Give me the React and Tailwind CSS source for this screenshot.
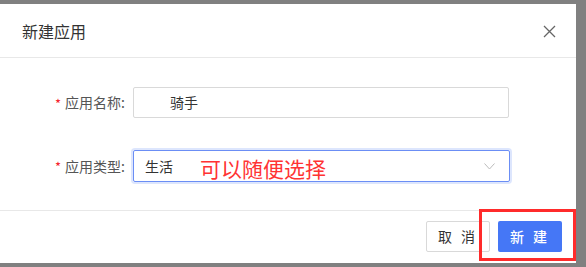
import React from "react";

export default function App() {
  const font = { fontFamily: '"Noto Sans CJK SC", "Noto Sans", sans-serif' };
  return (
    <div className="w-[586px] h-[267px] bg-[#808080] pt-[4px] overflow-hidden" style={font}>
      <div className="w-[576px] h-[259px] bg-white flex flex-col">
        {/* header */}
        <div className="h-[54px] border-b border-[#e8e8e8] flex items-center justify-between pl-[22px] pr-[20px]">
          <span className="text-[16px] text-[#333]">新建应用</span>
          <svg width="13" height="13" viewBox="0 0 13 13" className="mt-[1px]">
            <path d="M1 1 L12 12 M12 1 L1 12" stroke="#666" strokeWidth="1.3" fill="none" />
          </svg>
        </div>
        {/* body */}
        <div className="flex flex-col pt-[29px] gap-[32px] h-[153px] border-b border-[#e8e8e8]">
          <div className="flex items-center">
            <div className="w-[133px] pr-[8px] flex justify-end items-center text-[14px] text-[#555]">
              <span className="text-[#f5222d] mr-[4px] text-[13px] mt-[2px]">*</span>
              <span>应用名称:</span>
            </div>
            <div className="w-[376px] h-[31px] border border-[#d9d9d9] rounded-[2px] flex items-center pl-[36px] text-[14px] text-[#333]">
              骑手
            </div>
          </div>
          <div className="flex items-center">
            <div className="w-[133px] pr-[8px] flex justify-end items-center text-[14px] text-[#555]">
              <span className="text-[#f5222d] mr-[4px] text-[13px] mt-[2px]">*</span>
              <span>应用类型:</span>
            </div>
            <div className="w-[377px] h-[32px] border border-[#6b8ef5] rounded-[2px] shadow-[0_0_0_2px_rgba(64,118,246,0.18)] flex items-center pl-[11px] pr-[14px] text-[14px] text-[#333]">
              <span>生活</span>
              <span className="ml-[27px] text-[21px] leading-none text-[#ff3333] mt-[4px]">可以随便选择</span>
              <svg width="11" height="7" viewBox="0 0 11 7" className="ml-auto">
                <path d="M0.5 0.5 L5.5 6 L10.5 0.5" stroke="#bbb" strokeWidth="1" fill="none" />
              </svg>
            </div>
          </div>
        </div>
        {/* footer */}
        <div className="relative flex-1 flex justify-end items-start pt-[10px] pr-[14px] gap-[8px]">
          <button className="w-[64px] h-[31px] border border-[#d9d9d9] rounded-[2px] bg-white text-[14px] text-[#333] tracking-[3px]">
            取 消
          </button>
          <button className="w-[64px] h-[31px] rounded-[2px] bg-[#4577f6] text-[14px] text-white font-medium tracking-[3px]">
            新 建
          </button>
          <div className="absolute left-[479px] top-[-2px] w-[97px] h-[52px] border-[3px] border-[#ff2b2b]" />
        </div>
      </div>
    </div>
  );
}
